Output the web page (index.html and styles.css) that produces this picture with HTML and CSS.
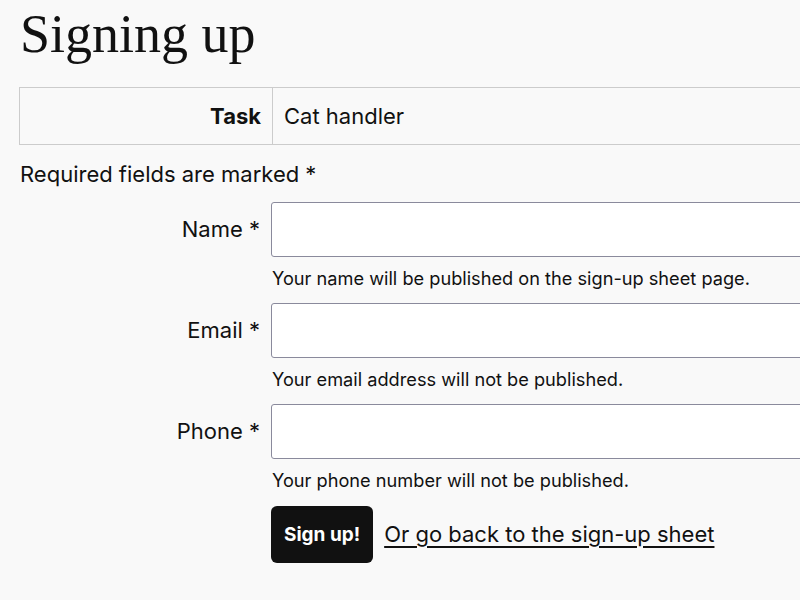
FILE: index.html
```html
<!DOCTYPE html>
<html lang="en">
<head>
<meta charset="utf-8">
<title>Signing up</title>
<link rel="stylesheet" href="styles.css">
</head>
<body>
<main class="page">
  <h1 class="title">Signing up</h1>
  <table class="task-table">
    <tr>
      <th class="task-head">Task</th>
      <td class="task-value">Cat handler</td>
    </tr>
  </table>
  <p class="required-note">Required fields are marked *</p>
  <form class="signup-form">
    <label class="field-label" for="name">Name *</label>
    <div class="field">
      <input class="field-input" id="name" type="text">
      <div class="field-help">Your name will be published on the sign-up sheet page.</div>
    </div>
    <label class="field-label" for="email">Email *</label>
    <div class="field">
      <input class="field-input" id="email" type="email">
      <div class="field-help">Your email address will not be published.</div>
    </div>
    <label class="field-label" for="phone">Phone *</label>
    <div class="field">
      <input class="field-input" id="phone" type="tel">
      <div class="field-help">Your phone number will not be published.</div>
    </div>
    <div class="spacer"></div>
    <div class="actions">
      <button class="submit" type="button">Sign up!</button>
      <a class="back-link" href="#">Or go back to the sign-up sheet</a>
    </div>
  </form>
</main>
</body>
</html>
```

FILE: styles.css
```css
html, body {
  margin: 0;
  padding: 0;
  overflow: hidden;
  background: #f9f9f9;
}
body {
  font-family: Inter, "Noto Sans", sans-serif;
  font-size: 22px;
  line-height: 1.4;
  color: #111;
}
.page {
  width: 1000px;
  padding: 2px 20px 0 20px;
}
.title {
  font-family: "Liberation Serif", "DejaVu Serif", serif;
  font-weight: normal;
  font-size: 54px;
  line-height: 1.2;
  margin: 0 0 20px 0;
}
.task-table {
  width: 100%;
  border-collapse: collapse;
  margin-left: -1px;
}
.task-table th,
.task-table td {
  border: 1px solid #cccccc;
  padding: 13px 11px;
  line-height: 30px;
}
.task-head {
  width: 230px;
  text-align: right;
  font-weight: bold;
}
.task-value {
  text-align: left;
  padding-left: 12px;
}
.required-note {
  margin: 14px 0 13px 0;
  line-height: 30px;
}
.signup-form {
  display: grid;
  grid-template-columns: 240px 1fr;
  column-gap: 11px;
  align-items: start;
}
.field-label {
  text-align: right;
  line-height: 55px;
}
.field {
  display: flex;
  flex-direction: column;
  padding-bottom: 12px;
}
.field-input {
  box-sizing: border-box;
  height: 55px;
  width: 100%;
  border: 1px solid #8a8a9c;
  border-radius: 3px;
  background: #fff;
  font: inherit;
}
.field-help {
  font-size: 18.2px;
  line-height: 25px;
  margin-top: 9px;
  padding-left: 1px;
}
.actions {
  display: flex;
  align-items: center;
  gap: 11px;
  padding-top: 1px;
}
.submit {
  background: #111;
  color: #fff;
  border: none;
  border-radius: 6px;
  font-family: Inter, sans-serif;
  font-weight: bold;
  font-size: 19px;
  line-height: 27px;
  padding: 15px 13px;
  white-space: nowrap;
  height: 57px;
}
.back-link {
  color: #111;
  text-decoration: underline;
  text-underline-offset: 4px;
  font-size: 22px;
}
```
